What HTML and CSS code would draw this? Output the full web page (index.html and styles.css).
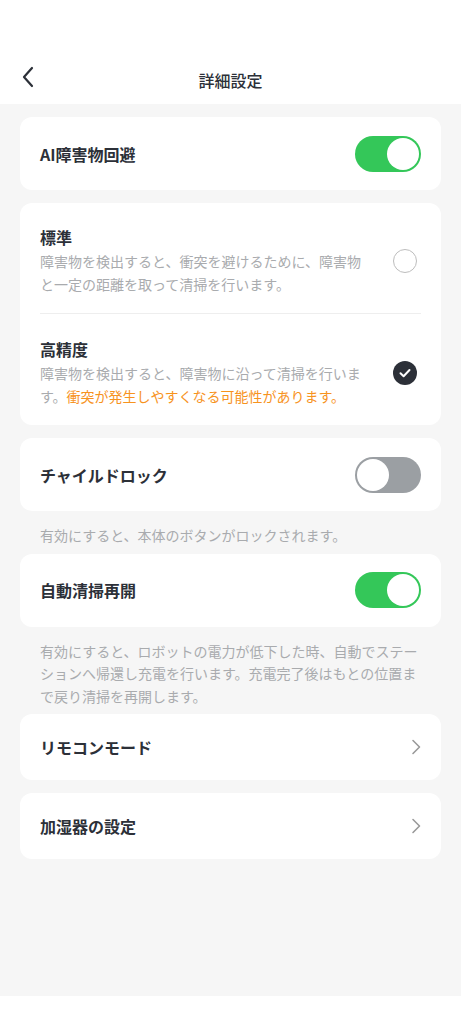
FILE: index.html
```html
<!DOCTYPE html>
<html>
  <head>
    <meta charset="utf-8">
    <title>詳細設定</title>
    <link rel="stylesheet" href="styles.css">
  </head>
  <body>
    <div class="header">
      <span class="back">
        <svg width="14" height="22" viewBox="0 0 14 22"><path d="M11 2 L3 11 L11 20" fill="none" stroke="#2c3038" stroke-width="2.2" stroke-linecap="round" stroke-linejoin="round"/></svg>
      </span>
      <h1>詳細設定</h1>
    </div>

    <div class="main">
      <div class="card row">
        <span class="title">AI障害物回避</span>
        <span class="toggle on"><span class="knob"></span></span>
      </div>

      <div class="card list">
        <div class="item">
          <div class="text">
            <div class="title">標準</div>
            <div class="desc">障害物を検出すると、衝突を避けるために、障害物と一定の距離を取って清掃を行います。</div>
          </div>
          <span class="radio"></span>
        </div>
        <div class="item">
          <div class="text">
            <div class="title">高精度</div>
            <div class="desc">障害物を検出すると、障害物に沿って清掃を行います。<span class="warn">衝突が発生しやすくなる可能性があります。</span></div>
          </div>
          <span class="radio checked">
            <svg width="24" height="24" viewBox="0 0 24 24"><path d="M7.5 12.3 L10.6 15.2 L16.5 9" fill="none" stroke="#fff" stroke-width="2" stroke-linecap="round" stroke-linejoin="round"/></svg>
          </span>
        </div>
      </div>

      <div class="card row">
        <span class="title">チャイルドロック</span>
        <span class="toggle"><span class="knob"></span></span>
      </div>
      <p class="note">有効にすると、本体のボタンがロックされます。</p>

      <div class="card row">
        <span class="title">自動清掃再開</span>
        <span class="toggle on"><span class="knob"></span></span>
      </div>
      <p class="note">有効にすると、ロボットの電力が低下した時、自動でステーションへ帰還し充電を行います。充電完了後はもとの位置まで戻り清掃を再開します。</p>

      <div class="card row link">
        <span class="title">リモコンモード</span>
        <svg width="10" height="16" viewBox="0 0 10 16"><path d="M2 1.5 L8.5 8 L2 14.5" fill="none" stroke="#9a9a9a" stroke-width="1.6" stroke-linecap="round" stroke-linejoin="round"/></svg>
      </div>

      <div class="card row link">
        <span class="title">加湿器の設定</span>
        <svg width="10" height="16" viewBox="0 0 10 16"><path d="M2 1.5 L8.5 8 L2 14.5" fill="none" stroke="#9a9a9a" stroke-width="1.6" stroke-linecap="round" stroke-linejoin="round"/></svg>
      </div>
    </div>
    <div class="footer"></div>
  </body>
</html>
```

FILE: styles.css
```css
body {
  font-family: "Noto Sans CJK JP", "Noto Sans", sans-serif;
  margin: 0;
  padding: 0;
  background-color: #fff;
  color: #2c3038;
}

.header {
  height: 104px;
  display: flex;
  align-items: flex-end;
  justify-content: center;
  padding-bottom: 12px;
  box-sizing: border-box;
  position: relative;
  background-color: #fff;
}
.header h1 {
  margin: 0;
  font-size: 16px;
  font-weight: 500;
  line-height: 24px;
}
.back {
  position: absolute;
  left: 21px;
  top: 66px;
  width: 14px;
  height: 22px;
}

.main {
  background-color: #f6f6f6;
  height: 892px;
  padding: 13px 20px 0;
  box-sizing: border-box;
}
.footer {
  height: 28px;
  background-color: #fff;
}

.card {
  background-color: #fff;
  border-radius: 12px;
  margin-bottom: 13px;
}
.row {
  height: 73px;
  padding: 0 20px;
  display: flex;
  align-items: center;
  justify-content: space-between;
}
.row.link {
  height: 66px;
}
.title {
  font-size: 16px;
  font-weight: bold;
  line-height: 24px;
}
.list {
  padding: 0 20px;
}
.item {
  display: flex;
  align-items: center;
  justify-content: space-between;
  padding: 22px 0 17px;
}
.item + .item {
  border-top: 1px solid #eeeeee;
  padding-top: 23px;
}
.text {
  max-width: 330px;
}
.desc {
  margin-top: 1px;
  font-size: 14px;
  line-height: 23px;
  color: #a9abae;
}
.warn {
  color: #f7931e;
}
.radio {
  width: 24px;
  height: 24px;
  border-radius: 50%;
  border: 1.5px solid #bdbdbd;
  box-sizing: border-box;
  margin-right: 4px;
  flex-shrink: 0;
}
.radio.checked {
  border: none;
  background-color: #2c3038;
}
.radio svg {
  display: block;
}

.toggle {
  width: 66px;
  height: 36px;
  border-radius: 18px;
  background-color: #9b9fa3;
  box-sizing: border-box;
  padding: 2px;
  display: flex;
  justify-content: flex-start;
  flex-shrink: 0;
}
.toggle.on {
  background-color: #34c759;
  justify-content: flex-end;
}
.knob {
  width: 32px;
  height: 32px;
  border-radius: 50%;
  background-color: #fff;
}

.note {
  margin: 0 0 7px;
  padding: 0 20px;
  font-size: 14px;
  line-height: 22.5px;
  color: #a9abae;
}
```
